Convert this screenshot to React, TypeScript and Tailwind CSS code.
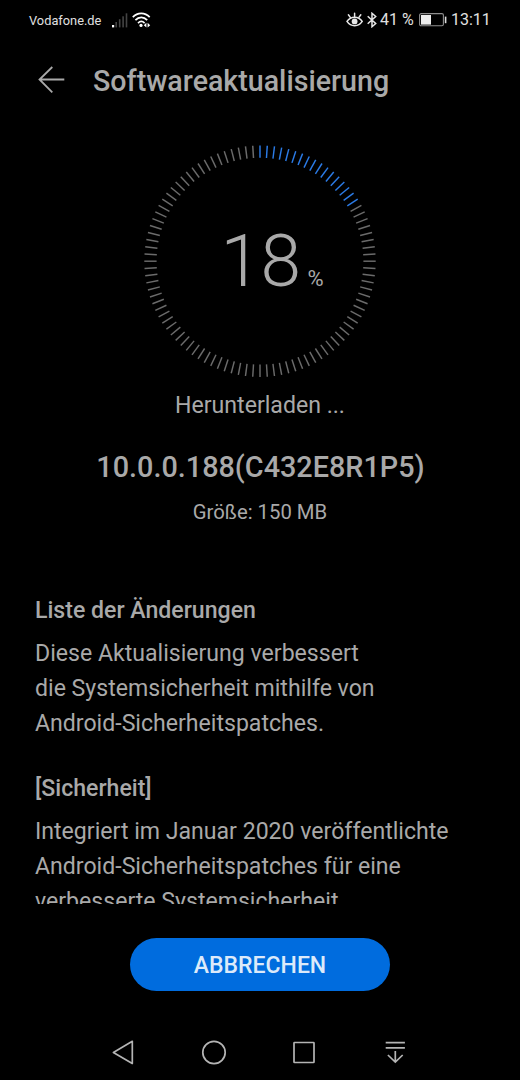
const TICK_COUNT = 100;
const ACTIVE_TICKS = 17;

function StatusBar() {
  return (
    <header className="flex h-10 shrink-0 items-center justify-between pr-[30px] pl-[29px] text-[#e0e0e0]">
      <div className="flex items-center">
        <span className="w-[83px] pt-px text-[12.8px] whitespace-nowrap">Vodafone.de</span>
        <svg className="h-[15px] w-[16px]" viewBox="0 0 16 15">
          <rect x="0" y="12" width="2.2" height="2.4" fill="#fff" />
          <rect x="3.4" y="9" width="1.6" height="5.4" fill="#444" />
          <rect x="6.9" y="6.2" width="1.6" height="8.2" fill="#444" />
          <rect x="10.3" y="3.3" width="1.6" height="11.1" fill="#444" />
          <rect x="13.7" y="0.3" width="1.6" height="14.1" fill="#444" />
        </svg>
        <svg className="ml-1 h-[16px] w-[19px]" viewBox="0 0 19 16" fill="none" stroke="#fff" strokeWidth="1.7">
          <path d="M.8 5.2C5.5.1 13 .1 17.7 5.2M3.4 8.2c3.4-3.7 8.4-3.7 11.8 0M6 11.1c2-2 4.6-2 6.6 0" />
          <circle cx="9" cy="13.4" r="1.6" fill="#fff" stroke="none" />
          <path d="M14.4 10.8v4.8l-2.6-2.4zM15.6 10.8v4.8l2.6-2.4z" fill="#fff" stroke="none" />
        </svg>
      </div>
      <div className="flex items-center">
        <svg className="h-[17px] w-[18px]" viewBox="0 0 18 17" fill="none" stroke="#e8e8e8" strokeWidth="1.5" strokeLinecap="round">
          <path d="M1 9.4C4.8 3.8 12.5 3.8 16.2 9.4C12.5 15.1 4.8 15.1 1 9.4z" />
          <circle cx="8.6" cy="9.4" r="2.9" fill="#e8e8e8" stroke="none" />
          <path d="M8.6 4.5V1.2M4.3 5.4L2.4 2.8M12.9 5.4l1.9-2.6" />
        </svg>
        <svg className="ml-[2px] h-[16px] w-[13px]" viewBox="0 0 13 16" fill="none" stroke="#e8e8e8" strokeWidth="1.5">
          <path d="M1.7 4.2l8 7.3L6 14.7V1.3l3.7 3.2-8 7.3" />
        </svg>
        <span className="ml-px w-[39px] text-[16px] whitespace-nowrap">41 %</span>
        <svg className="h-[14px] w-[28px]" viewBox="0 0 28 14">
          <rect x=".6" y=".6" width="23.8" height="12.2" rx="1.5" fill="none" stroke="#8e8e8e" strokeWidth="1.1" />
          <rect x="2" y="2" width="10" height="9.6" fill="#eee" />
          <rect x="25.8" y="3.6" width="1.6" height="6.6" fill="#ddd" />
        </svg>
        <span className="ml-[4px] w-[39px] text-[16px] whitespace-nowrap">13:11</span>
      </div>
    </header>
  );
}

function ProgressRing() {
  return (
    <div className="relative mx-auto h-[240px] w-[240px] shrink-0">
      <svg className="h-[240px] w-[240px]" viewBox="0 0 240 240">
        {Array.from({ length: TICK_COUNT }, (_, i) => (
          <line
            key={i}
            x1="120"
            x2="120"
            y1="5.5"
            y2="17.8"
            strokeWidth="1.45"
            stroke={i < ACTIVE_TICKS ? "#2b7be6" : "#6b6b6b"}
            transform={`rotate(${i * 3.6} 120 121.2)`}
          />
        ))}
      </svg>
      <div className="absolute inset-0 flex items-baseline pt-[77px] pl-[80.5px] leading-[88px]">
        <span className="w-[87px] text-[73px] font-light tracking-[-0.5px]">18</span>
        <span className="text-[22px]">%</span>
      </div>
    </div>
  );
}

function NavigationBar() {
  return (
    <nav className="flex h-[56px] shrink-0 items-center justify-between pr-[112px] pl-[110px] text-[#b4b4b4]">
      <svg className="h-[28px] w-[26px]" viewBox="0 0 26 28" fill="none" stroke="currentColor" strokeWidth="1.7" strokeLinejoin="round">
        <path d="M22.3 3.3v22.2L3.4 14.4z" />
      </svg>
      <svg className="h-[28px] w-[26px]" viewBox="0 0 26 28" fill="none" stroke="currentColor" strokeWidth="1.7">
        <circle cx="13" cy="14.5" r="11.2" />
      </svg>
      <svg className="h-[28px] w-[26px]" viewBox="0 0 26 28" fill="none" stroke="currentColor" strokeWidth="1.7" strokeLinejoin="round">
        <rect x="3" y="4.5" width="20" height="20" rx=".6" />
      </svg>
      <svg className="h-[28px] w-[26px]" viewBox="0 0 26 28" fill="none" stroke="currentColor" strokeWidth="1.7">
        <path d="M3.7 4.7h19.2M3.7 9.9h19.2M13.3 13v11M5.9 17l7.4 7 7.4-7" />
      </svg>
    </nav>
  );
}

export default function App() {
  return (
    <div className="flex h-[1080px] w-[520px] flex-col overflow-hidden bg-black font-['Roboto',sans-serif] text-[#a9a9a9]">
      <StatusBar />
      <div className="flex h-[80px] shrink-0 items-center pl-[37px]">
        <svg className="h-[28px] w-[28px]" viewBox="0 0 28 28" fill="none" stroke="currentColor" strokeWidth="1.8">
          <path d="M27.3 13.5H2.5M15.3 1L2.5 13.5l12.8 12.8" />
        </svg>
        <h1 className="ml-[28px] pt-[3px] text-[28.6px] font-medium">Softwareaktualisierung</h1>
      </div>
      <main className="flex h-[784px] shrink-0 flex-col overflow-hidden pt-5">
        <ProgressRing />
        <p className="mt-[10px] text-center text-[23.1px] leading-[32px]">Herunterladen ...</p>
        <h2 className="mt-[25px] pl-px text-center text-[28.8px] leading-[40px] font-medium">10.0.0.188(C432E8R1P5)</h2>
        <p className="mt-[10px] text-center text-[20.3px] leading-[30px]">Größe: 150 MB</p>
        <section className="mt-[67px] pl-[35px] text-[23.1px] leading-[34.7px]">
          <h3 className="font-medium">Liste der Änderungen</h3>
          <p className="mt-[8.4px]">
            Diese Aktualisierung verbessert
            <br />
            die Systemsicherheit mithilfe von
            <br />
            Android-Sicherheitspatches.
          </p>
          <h3 className="mt-[31px] font-medium">[Sicherheit]</h3>
          <p className="mt-[8.4px]">
            Integriert im Januar 2020 veröffentlichte
            <br />
            Android-Sicherheitspatches für eine
            <br />
            verbesserte Systemsicherheit.
          </p>
        </section>
      </main>
      <div className="flex h-[120px] shrink-0 justify-center pt-[34px]">
        <button className="h-[53px] w-[260px] rounded-full bg-[#006cde] pt-[3px] text-[23px] font-medium text-[#dceafa]">ABBRECHEN</button>
      </div>
      <NavigationBar />
    </div>
  );
}
